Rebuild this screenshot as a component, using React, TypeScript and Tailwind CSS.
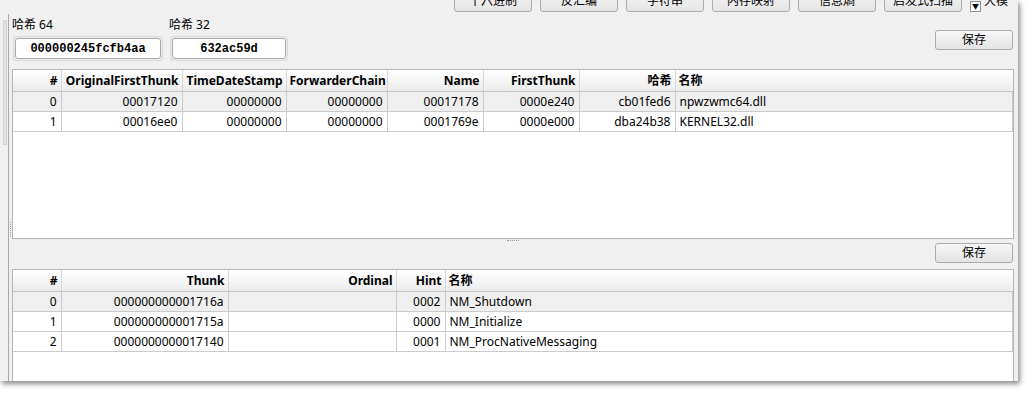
import React from 'react';

const uiFont = { fontFamily: '"Noto Sans", "Noto Sans CJK SC", sans-serif' };

interface Col {
    title: string;
    width?: number;
    align: 'left' | 'right';
}

const importCols: Col[] = [
    { title: '#', width: 48, align: 'right' },
    { title: 'OriginalFirstThunk', width: 121, align: 'right' },
    { title: 'TimeDateStamp', width: 104, align: 'right' },
    { title: 'ForwarderChain', width: 101, align: 'right' },
    { title: 'Name', width: 96, align: 'right' },
    { title: 'FirstThunk', width: 96, align: 'right' },
    { title: '哈希', width: 96, align: 'right' },
    { title: '名称', align: 'left' },
];

const importRows = [
    ['0', '00017120', '00000000', '00000000', '00017178', '0000e240', 'cb01fed6', 'npwzwmc64.dll'],
    ['1', '00016ee0', '00000000', '00000000', '0001769e', '0000e000', 'dba24b38', 'KERNEL32.dll'],
];

const thunkCols: Col[] = [
    { title: '#', width: 48, align: 'right' },
    { title: 'Thunk', width: 167, align: 'right' },
    { title: 'Ordinal', width: 168, align: 'right' },
    { title: 'Hint', width: 49, align: 'right' },
    { title: '名称', align: 'left' },
];

const thunkRows = [
    ['0', '000000000001716a', '', '0002', 'NM_Shutdown'],
    ['1', '000000000001715a', '', '0000', 'NM_Initialize'],
    ['2', '0000000000017140', '', '0001', 'NM_ProcNativeMessaging'],
];

const topButtons = ['十六进制', '反汇编', '字符串', '内存映射', '信息熵', '启发式扫描'];

const SaveButton: React.FC = () => (
    <button className="w-[78px] h-[20px] shrink-0 rounded-[3px] border border-[#adadad] bg-gradient-to-b from-[#f6f6f6] to-[#e4e4e4] text-[12px] leading-[18px] text-black">
        保存
    </button>
);

const DataTable: React.FC<{ cols: Col[]; rows: string[][]; className: string; bottomBorder?: boolean }> = ({ cols, rows, className, bottomBorder }) => (
    <div className={`bg-white border-t border-l border-r border-[#b4b4b4] overflow-hidden ${bottomBorder ? 'border-b' : ''} ${className}`}>
        <table className="w-full table-fixed border-collapse text-[12px] text-black">
            <colgroup>
                {cols.map((c, i) => (
                    <col key={i} style={c.width ? { width: c.width } : undefined} />
                ))}
            </colgroup>
            <thead>
                <tr className="bg-gradient-to-b from-white to-[#ececec]">
                    {cols.map((c, i) => (
                        <th
                            key={i}
                            className={`h-[21px] py-0 leading-[17px] font-bold px-[3px] border-b border-[#c6c6c6] whitespace-nowrap overflow-hidden ${i < cols.length - 1 ? 'border-r border-r-[#d6d6d6]' : ''} ${c.align === 'right' ? 'text-right' : 'text-left'}`}
                        >
                            {c.title}
                        </th>
                    ))}
                </tr>
            </thead>
            <tbody>
                {rows.map((r, ri) => (
                    <tr key={ri} className={ri === 0 ? 'bg-[#efefef]' : 'bg-white'}>
                        {r.map((v, ci) => (
                            <td
                                key={ci}
                                className={`h-[20px] px-[4px] py-0 leading-[15px] border-b border-r border-[#cbcbcb] whitespace-nowrap overflow-hidden ${cols[ci].align === 'right' ? 'text-right' : 'text-left'}`}
                            >
                                {v}
                            </td>
                        ))}
                    </tr>
                ))}
            </tbody>
        </table>
    </div>
);

const HashBox: React.FC<{ label: string; value: string; width: string }> = ({ label, value, width }) => (
    <div className="flex flex-col">
        <div className="h-[14px] leading-[16px] text-[12px] text-black mb-[5px]">{label}</div>
        <div className={`${width} h-[25px] p-[1px] ml-[1px] rounded-[3px] border border-[#dadada] bg-[#ebebeb]`}>
            <div
                className="h-full rounded-[3px] border border-[#a9a9a9] bg-white flex items-center justify-center text-[12px] font-bold text-black"
                style={{ fontFamily: '"Liberation Mono", monospace' }}
            >
                {value}
            </div>
        </div>
    </div>
);

export default function App() {
    return (
        <div className="w-[1033px] h-[394px] bg-white overflow-hidden" style={uiFont}>
            <div className="w-[1018px] h-[381px] bg-[#f0f0f0] flex shadow-[2px_3px_5px_rgba(0,0,0,0.45)]">
                {/* left edge strip */}
                <div className="w-[9px] shrink-0 flex">
                    <div className="w-[8px] pt-[20px] pl-[3px]">
                        <div className="w-[4px] h-[125px] bg-[#e2e2e2] border border-[#d4d4d4]"></div>
                    </div>
                    <div className="w-[1px] mt-[14px] bg-[#a9a9a9]"></div>
                </div>

                <div className="flex-1 flex flex-col pl-[3px] pr-[4px] relative">
                    {/* cut-off tool buttons */}
                    <div className="h-[12px] overflow-hidden flex items-end justify-end gap-[8px] pr-[6px]">
                        {topButtons.map(b => (
                            <button
                                key={b}
                                className="w-[78px] h-[23px] shrink-0 rounded-[3px] border border-[#adadad] bg-gradient-to-b from-[#f4f4f4] to-[#e6e6e6] text-[12px] leading-[14px] text-black"
                            >
                                {b}
                            </button>
                        ))}
                        <div className="flex items-start gap-[3px] h-[20px] shrink-0">
                            <div className="w-[11px] h-[11px] mt-[9px] border border-[#8f8f8f] bg-white flex items-center justify-center text-[7px] leading-none">▼</div>
                            <span className="text-[12px] leading-[14px] mt-[2px]">大模</span>
                        </div>
                    </div>

                    {/* hash row */}
                    <div className="flex justify-between pt-[5px]">
                        <div className="flex gap-[6px]">
                            <HashBox label="哈希 64" value="000000245fcfb4aa" width="w-[150px]" />
                            <HashBox label="哈希 32" value="632ac59d" width="w-[118px]" />
                        </div>
                        <div className="pt-[9px] pr-[1px]">
                            <SaveButton />
                        </div>
                    </div>

                    <DataTable cols={importCols} rows={importRows} className="mt-[8px] h-[170px]" bottomBorder />

                    {/* splitter */}
                    <div className="h-[4px] flex justify-center">
                        <div className="w-[12px] mt-[1px] h-[1px] border-t border-dotted border-[#9a9a9a]"></div>
                    </div>
                    <div className="absolute left-[1px] top-[222px] h-[15px] border-l border-dotted border-[#a0a0a0]"></div>

                    <div className="flex justify-end pr-[1px]">
                        <SaveButton />
                    </div>

                    <DataTable cols={thunkCols} rows={thunkRows} className="mt-[6px] flex-1" />
                </div>
            </div>
        </div>
    );
}
